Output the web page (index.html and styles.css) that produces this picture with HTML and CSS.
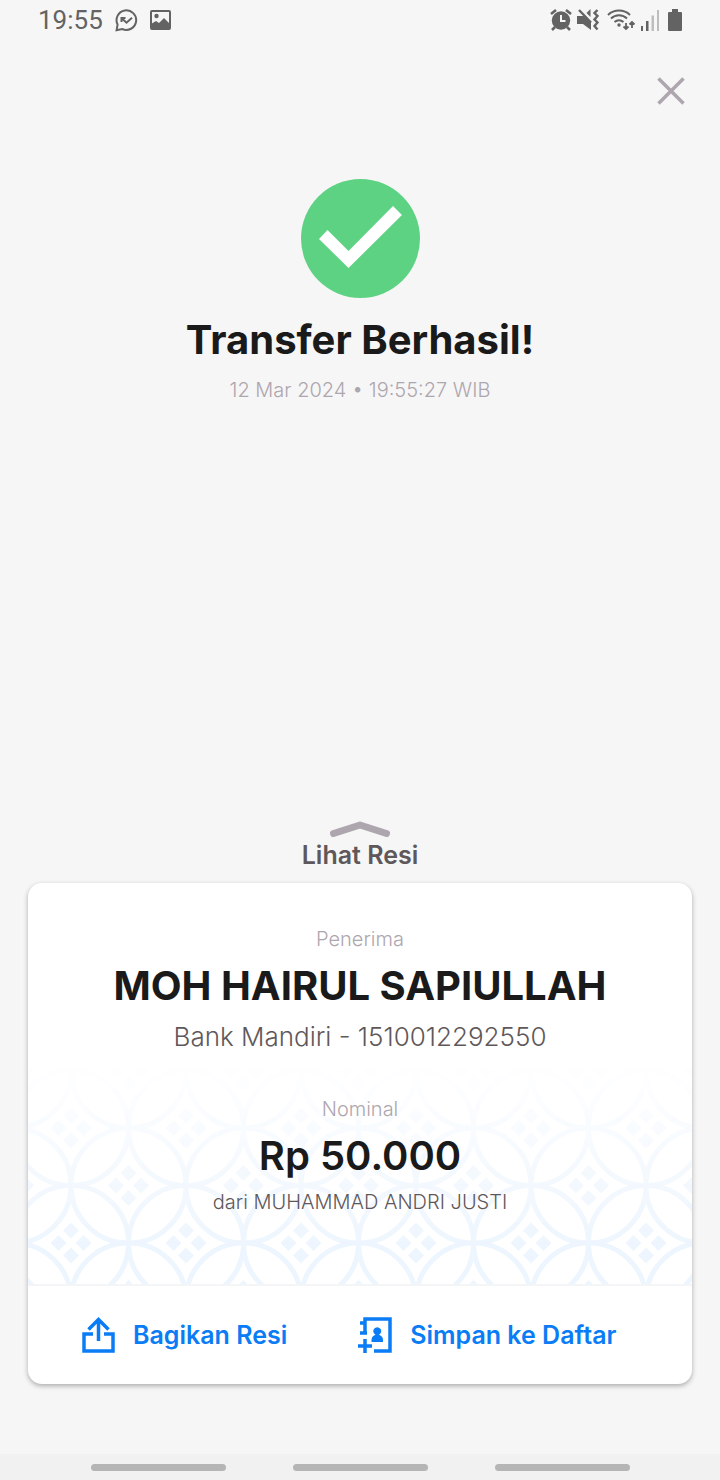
FILE: index.html
```html
<!DOCTYPE html>
<html lang="id">
<head>
    <meta charset="UTF-8">
    <meta name="viewport" content="width=device-width, initial-scale=1.0">
    <title>Transfer Berhasil</title>
    <link rel="stylesheet" href="styles.css">
</head>
<body>
    <header class="status-bar">
        <div class="status-left">
            <span class="clock">19:55</span>
            <svg width="23" height="23" viewBox="0 0 23 23" fill="none" stroke="#636363" stroke-width="2">
                <path d="M2.6 15.5A9.8 9.8 0 1 1 7.2 20L1.6 21.2Z"/>
                <path d="M6.5 13V9h4M7 9.5l4.5 4.2 5.5-5"/>
            </svg>
            <svg width="21" height="20" viewBox="0 0 21 20">
                <rect x="1" y="1" width="19" height="18" rx="1" fill="none" stroke="#636363" stroke-width="2"/>
                <circle cx="6.5" cy="6" r="2.2" fill="#636363"/>
                <path d="M1 14l5-3 3 2 5-5 6 6v5H1z" fill="#636363"/>
            </svg>
        </div>
        <div class="status-right">
            <svg width="22" height="22" viewBox="0 0 22 22" fill="none" stroke="#636363" stroke-width="2.6">
                <circle cx="11" cy="11.5" r="9.2" fill="#636363" stroke="none"/>
                <path d="M1 5l5-4M16 1l5 4M5 18l-3 3M17 18l3 3"/>
                <path d="M11 6v6h4.5" stroke="#f6f6f6" stroke-width="2"/>
            </svg>
            <svg width="22" height="22" viewBox="0 0 22 22">
                <path d="M0 7h6l1-1 7 7v8l-8-6H0zM9.5 4l4-4v8z" fill="#636363"/>
                <path d="M2 1l12 12.5M20.5 1l-3 3 3 3-3 3.5 3 3-3 3.5 3 3.500" fill="none" stroke="#636363" stroke-width="2.4"/>
            </svg>
            <svg class="wifi-icon" width="29" height="22" viewBox="0 0 29 22" fill="none" stroke="#636363" stroke-width="2">
                <path d="M1 6a16 16 0 0 1 22 0M4 9.5a11.5 11.5 0 0 1 16 0M7.5 13a7 7 0 0 1 9 0"/>
                <circle cx="12" cy="16" r="1.7" fill="#636363" stroke="none"/>
                <path d="M19 14v6M16.5 17.5l2.5 2.5 2.5-2.5M25 19v-6M22.5 15.5l2.5-2.5 2.5 2.5" stroke-width="1.8"/>
            </svg>
            <svg width="18" height="21" viewBox="0 0 18 21" fill="#636363">
                <path d="M0 16h2v5H0zM5 11h2.5v10H5z"/>
                <path d="M10.5 5.5H13V21h-2.5zM16 0h2v21h-2z" fill="#bdbdbd"/>
            </svg>
            <svg class="battery-icon" width="14" height="22" viewBox="0 0 14 22" fill="#636363">
                <path d="M4 0h6v3h3a1 1 0 0 1 1 1v17a1 1 0 0 1-1 1H1a1 1 0 0 1-1-1V4a1 1 0 0 1 1-1h3z"/>
            </svg>
        </div>
    </header>

    <main class="screen">
        <button class="close" type="button" aria-label="Tutup">
            <svg width="28" height="28" viewBox="0 0 28 28" fill="none" stroke="#aea6ae" stroke-width="3.5">
                <path d="M1.5 1.5l25 25M26.5 1.5l-25 25"/>
            </svg>
        </button>

        <section class="result">
            <svg width="119" height="119" viewBox="0 0 119 119">
                <circle cx="59.5" cy="59.5" r="59.5" fill="#5dd283"/>
                <path d="M18 60l8.5-9 21 21L92 27l9 9-53.5 53z" fill="#fff"/>
            </svg>
            <h1>Transfer Berhasil!</h1>
            <p class="date">12 Mar 2024 • 19:55:27 WIB</p>
        </section>

        <button class="show-receipt" type="button">
            <svg width="60" height="16" viewBox="0 0 60 16" fill="none" stroke="#aea6ae" stroke-width="7" stroke-linecap="round" stroke-linejoin="round">
                <path d="M3.5 12.5L30 4l26.5 8.5"/>
            </svg>
            Lihat Resi
        </button>

        <article class="card">
            <div class="receipt">
                <svg class="batik" width="100%" height="224">
                    <defs>
                        <pattern id="kawung" x="43" y="183" width="115" height="115" patternUnits="userSpaceOnUse">
                            <g fill="none" stroke="#edf5fe" stroke-width="5">
                                <circle cx="0" cy="0" r="57.5"/>
                                <circle cx="115" cy="0" r="57.5"/>
                                <circle cx="0" cy="115" r="57.5"/>
                                <circle cx="115" cy="115" r="57.5"/>
                                <circle cx="57.5" cy="57.5" r="57.5"/>
                            </g>
                            <g fill="#edf5fe">
                                <path id="petals" d="M57.5 37l8 8-8 8-8-8zM57.5 62l8 8-8 8-8-8zM45 49.5l8 8-8 8-8-8zM70 49.5l8 8-8 8-8-8z"/>
                                <use href="#petals" x="-57.5" y="-57.5"/>
                                <use href="#petals" x="57.5" y="-57.5"/>
                                <use href="#petals" x="-57.5" y="57.5"/>
                                <use href="#petals" x="57.5" y="57.5"/>
                            </g>
                        </pattern>
                    </defs>
                    <rect width="100%" height="224" fill="url(#kawung)"/>
                </svg>
                <p class="label">Penerima</p>
                <h2 class="name">MOH HAIRUL SAPIULLAH</h2>
                <p class="account">Bank Mandiri - 1510012292550</p>
                <p class="label">Nominal</p>
                <p class="amount">Rp 50.000</p>
                <p class="sender">dari MUHAMMAD ANDRI JUSTI</p>
            </div>
            <div class="actions">
                <button type="button">
                    <svg width="33" height="36" viewBox="0 0 33 36" fill="none" stroke="#0a7cf5" stroke-width="3.5">
                        <path d="M11 17H2v17h29V17h-9M16.5 24V3M6.5 12.5l10-10 10 10"/>
                    </svg>
                    Bagikan Resi
                </button>
                <button type="button">
                    <svg width="34" height="36" viewBox="0 0 34 36" fill="none" stroke="#0a7cf5" stroke-width="3.5">
                        <path d="M2 6h5M7 17V2h25v32H16M2 16h7M7 22v14M0 29h14"/>
                        <path d="M13.5 25v-2c0-3 2-4.5 4-5.2a4 4 0 1 1 3.5 0c2 .7 4 2.2 4 5.2v2z" fill="#0a7cf5" stroke="none"/>
                    </svg>
                    Simpan ke Daftar
                </button>
            </div>
        </article>
    </main>

    <nav class="nav-bar">
        <span></span>
        <span></span>
        <span></span>
    </nav>
</body>
</html>
```
FILE: styles.css
```css
* {
    margin: 0;
    padding: 0;
    box-sizing: border-box;
}

body {
    display: flex;
    flex-direction: column;
    min-height: 100vh;
    background: #f6f6f6;
    color: #1a1a1a;
    font-family: Inter, "Liberation Sans", sans-serif;
}

button {
    border: none;
    background: none;
    font-family: inherit;
    cursor: pointer;
}

svg {
    flex: none;
}

.status-bar {
    display: flex;
    justify-content: space-between;
    align-items: center;
    height: 40px;
    padding: 0 38px;
}

.status-left, .status-right {
    display: flex;
    align-items: center;
}

.status-left {
    gap: 12px;
}

.status-right {
    gap: 5px;
}

.wifi-icon {
    margin-left: 3px;
}

.battery-icon {
    margin-left: 4px;
}

.clock {
    color: #636363;
    font-family: Roboto, sans-serif;
    font-size: 26px;
    line-height: 40px;
}

.screen {
    flex: 1;
    display: flex;
    flex-direction: column;
    padding: 32px 28px 70px;
}

.close {
    align-self: flex-end;
    height: 38px;
    padding: 5px 7px;
}

.result {
    display: flex;
    flex-direction: column;
    align-items: center;
    padding-top: 69px;
}

h1, .name, .amount {
    font-size: 40px;
    font-weight: 700;
    line-height: 48px;
}

h1 {
    margin-top: 18px;
}

.date, .label, .sender {
    font-size: 20px;
    font-weight: 300;
    line-height: 28px;
}

.date {
    margin-top: 12px;
    color: #aea6ae;
}

.show-receipt {
    display: flex;
    flex-direction: column;
    align-items: center;
    align-self: center;
    gap: 2px;
    margin-top: auto;
    margin-bottom: 12px;
    color: #5f585a;
    font-size: 25px;
    font-weight: 600;
    line-height: 32px;
}

.card {
    border-radius: 14px;
    background: #fff;
    box-shadow: 0 2px 5px rgba(0, 0, 0, 0.3);
    overflow: hidden;
}

.receipt {
    position: relative;
    padding: 42px 20px 68px;
    text-align: center;
}

.receipt p, .receipt h2 {
    position: relative;
}

/* batik background behind the lower half of the receipt */
.batik {
    position: absolute;
    left: 0;
    bottom: 0;
    mask-image: linear-gradient(to bottom, transparent, #000 85%);
}

.label {
    color: #aea6ae;
}

.name, .amount {
    margin-top: 9px;
}

.amount {
    font-weight: 600;
}

.account {
    margin: 9px 0 40px;
    color: #5f585a;
    font-size: 26px;
    font-weight: 300;
    line-height: 36px;
}

.sender {
    margin-top: 8px;
    color: #5f585a;
}

.actions {
    display: flex;
    flex-wrap: wrap;
    gap: 0 71px;
    padding: 0 54px;
    border-top: 2px solid #f3f5f7;
}

.actions button {
    display: flex;
    align-items: center;
    gap: 18px;
    height: 98px;
    color: #0a7cf5;
    font-size: 25px;
    font-weight: 600;
    line-height: 32px;
}

.nav-bar {
    display: flex;
    justify-content: center;
    align-items: center;
    gap: 67px;
    height: 26px;
    background: #f1f1f1;
}

.nav-bar span {
    width: 135px;
    height: 7px;
    border-radius: 4px;
    background: #b5b5b5;
}
```
